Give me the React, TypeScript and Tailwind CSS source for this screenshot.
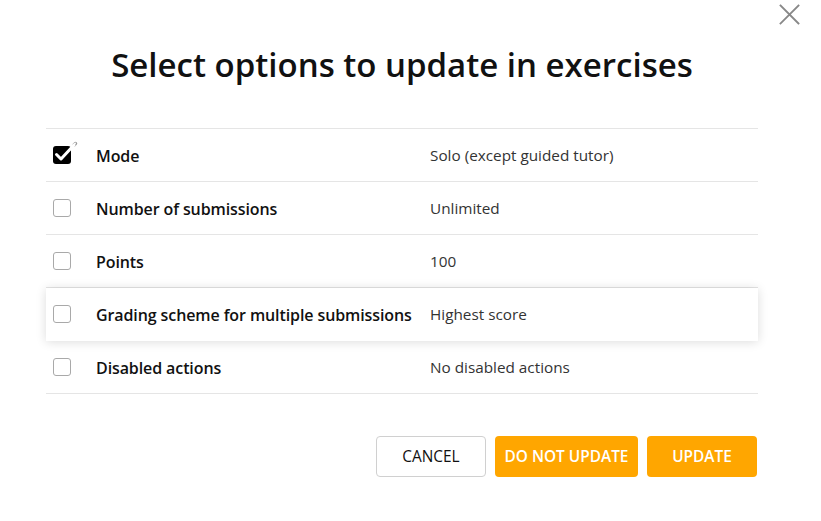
import React from "react";

const rows = [
  { label: "Mode", value: "Solo (except guided tutor)", checked: true, hover: false },
  { label: "Number of submissions", value: "Unlimited", checked: false, hover: false },
  { label: "Points", value: "100", checked: false, hover: false },
  { label: "Grading scheme for multiple submissions", value: "Highest score", checked: false, hover: true },
  { label: "Disabled actions", value: "No disabled actions", checked: false, hover: false },
];

function CheckBox({ checked }: { checked: boolean }) {
  if (checked) {
    return (
      <div className="relative w-[18px] h-[18px]">
        <div className="w-[18px] h-[18px] rounded-[3px] bg-black" />
        <svg className="absolute left-0 top-[-5px]" width="26" height="24" viewBox="0 0 26 24">
          <path d="M21 4 L22.5 2.5" fill="none" stroke="#999" strokeWidth="3.4" strokeLinecap="round" />
          <path d="M3.5 13.5 L8 18 L21 4" fill="none" stroke="#fff" strokeWidth="3" strokeLinecap="round" strokeLinejoin="round" />
          <path d="M20 4.5 L22.2 2.3" fill="none" stroke="#fff" strokeWidth="1.6" strokeLinecap="round" />
        </svg>
      </div>
    );
  }
  return <div className="w-[18px] h-[18px] rounded-[3px] border border-[#a9a9a9] bg-white" />;
}

export default function App() {
  return (
    <div
      className="relative w-[821px] h-[521px] bg-white text-[#222]"
      style={{ fontFamily: '"Open Sans", "Liberation Sans", sans-serif' }}
    >
      <button className="absolute right-[21px] top-[4px] w-[21px] h-[21px] flex items-center justify-center">
        <svg width="21" height="21" viewBox="0 0 21 21">
          <path d="M1.5 1.5 L19.5 19.5 M19.5 1.5 L1.5 19.5" stroke="#888" strokeWidth="1.8" strokeLinecap="square" />
        </svg>
      </button>
      <div className="pl-[46px] pr-[63px] pt-[43px] flex flex-col">
        <h1 className="text-center text-[33px] leading-[44px] font-semibold text-[#111] tracking-[0px]">
          Select options to update in exercises
        </h1>
        <div className="mt-[41px] border-t border-[#e5e5e5]">
          {rows.map((r) => (
            <div
              key={r.label}
              className={
                "flex items-center h-[53px] border-b border-[#e5e5e5] " +
                (r.hover ? "shadow-[0_1px_10px_rgba(0,0,0,0.14)] relative z-10 border-b-transparent" : "")
              }
            >
              <div className="w-[50px] pl-[7px] flex items-center">
                <CheckBox checked={r.checked} />
              </div>
              <div className="w-[334px] pt-[2px] text-[16px] leading-[20px] font-semibold text-[#111] tracking-[-0.1px]">{r.label}</div>
              <div className="text-[15.3px] leading-[20px] text-[#333]">{r.value}</div>
            </div>
          ))}
        </div>
        <div className="mt-[42px] flex justify-end gap-[9px] pr-px">
          <button className="w-[110px] h-[41px] rounded-[4px] border border-[#d0d0d0] bg-white text-[15.4px] text-[#111]">
            CANCEL
          </button>
          <button className="w-[143px] h-[41px] rounded-[4px] bg-[#ffa600] text-[15.4px] font-semibold text-white">
            DO NOT UPDATE
          </button>
          <button className="w-[110px] h-[41px] rounded-[4px] bg-[#ffa600] text-[15.4px] font-semibold text-white">
            UPDATE
          </button>
        </div>
      </div>
    </div>
  );
}
